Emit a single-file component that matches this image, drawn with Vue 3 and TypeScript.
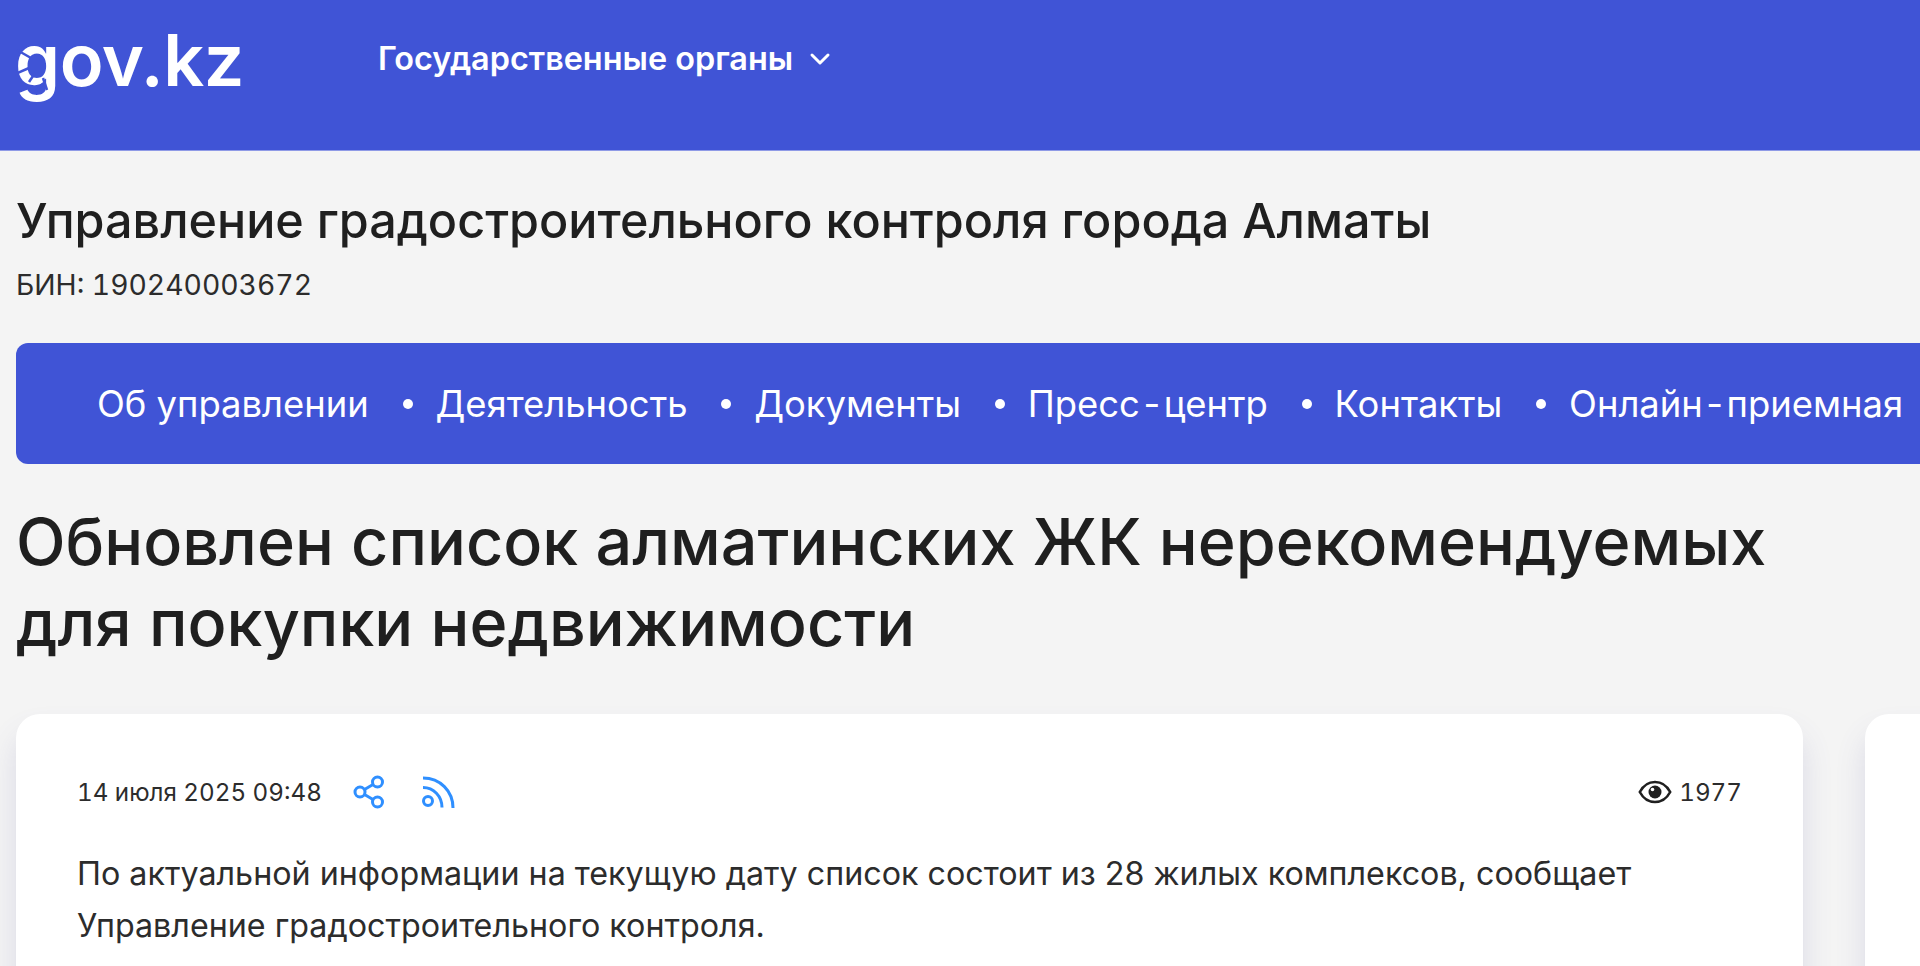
<script setup lang="ts">
interface NavItem { head: string; tail?: string }
const navItems: NavItem[] = [
  { head: 'Об управлении' },
  { head: 'Деятельность' },
  { head: 'Документы' },
  { head: 'Пресс', tail: 'центр' },
  { head: 'Контакты' },
  { head: 'Онлайн', tail: 'приемная' },
];
</script>

<template>
  <div class="page">
    <header class="top">
      <div class="logo">
        gov.kz
        <svg class="logo-cuts" width="60" height="70" viewBox="0 0 60 70" fill="none" stroke="#4054d6" stroke-width="2.500">
          <path d="M2 14l14 8" /><path d="M0 38l14-6" /><path d="M14 46l6-9" /><path d="M28 42l4 12" /><path d="M20 56l8-8" />
        </svg>
      </div>
      <div class="agencies">
        <span>Государственные органы</span>
        <svg width="22" height="14" viewBox="0 0 22 14" fill="none" stroke="#fff" stroke-width="3" stroke-linecap="round" stroke-linejoin="round"><path d="M3 3l8 8 8-8" /></svg>
      </div>
    </header>

    <main class="content">
      <h2 class="org">Управление градостроительного контроля города Алматы</h2>
      <div class="bin">БИН: 190240003672</div>

      <nav class="nav">
        <template v-for="(item, i) in navItems" :key="item.head">
          <span v-if="i > 0" class="dot"></span>
          <span class="nav-item">{{ item.head }}<span v-if="item.tail" class="hyphen">-</span>{{ item.tail }}</span>
        </template>
      </nav>

      <h1 class="title">Обновлен список алматинских ЖК нерекомендуемых для покупки недвижимости</h1>

      <div class="columns">
        <article class="card">
          <div class="meta">
            <span class="date">14 июля 2025 09:48</span>
            <svg class="ic share" width="32" height="34" viewBox="0 0 32 34" fill="none" stroke="#2f8fff" stroke-width="3">
              <circle cx="7" cy="17" r="5" /><circle cx="24.500" cy="7" r="5" /><circle cx="24.500" cy="27" r="5" />
              <path d="M11.500 14.500l8.500-5M11.500 19.500l8.500 5" />
            </svg>
            <svg class="ic rss" width="34" height="34" viewBox="0 0 34 34" fill="none" stroke="#2f8fff" stroke-width="3">
              <circle cx="7" cy="26" r="4.500" />
              <path d="M2 12.500c10.500 0 19 8.500 19 20" /><path d="M2 3c17 0 30 13 30 30" />
            </svg>
            <span class="views">
              <svg width="34" height="24" viewBox="0 0 34 24"><path fill="none" stroke="#1f1f1f" stroke-width="2.600" d="M1.800 12C5 6 10.500 2 17 2s12 4 15.200 10C29 18 23.500 22 17 22S5 18 1.800 12z" /><circle cx="17" cy="12" r="6.500" fill="#1f1f1f" /><circle cx="14.500" cy="9.500" r="1.800" fill="#fff" /></svg>
              1977
            </span>
          </div>
          <p class="text">По актуальной информации на текущую дату список состоит из 28 жилых комплексов, сообщает Управление градостроительного контроля.</p>
        </article>
        <aside class="side"></aside>
      </div>
    </main>
  </div>
</template>

<style>
html, body { margin: 0; padding: 0; background: #f4f4f4; overflow: hidden; }
</style>

<style scoped>
.page { width: 1920px; height: 966px; overflow: hidden; background: #f4f4f4; font-family: Inter, "Noto Sans", sans-serif; color: #1f1f1f; }
.top { height: 150px; background: #4054d6; display: flex; align-items: flex-start; color: #fff; border-bottom: 1px solid #8f9ae6; }
.logo { position: relative; margin-left: 15px; width: 363px; padding-top: 20px; font-size: 72px; line-height: 80px; font-weight: 600; letter-spacing: -0.4px; }
.logo-cuts { position: absolute; left: 0; top: 36px; }
.agencies { display: flex; align-items: center; gap: 16px; font-size: 32.4px; font-weight: 600; line-height: 40px; padding-top: 39px; }
.content { padding: 0 0 0 16px; }
.org { margin: 40px 0 0; font-size: 48.5px; line-height: 60px; font-weight: 500; }
.bin { margin-top: 16px; font-size: 28.3px; line-height: 36px; color: #2c2c2c; font-variant-numeric: tabular-nums; }
.nav { margin-top: 40px; height: 121px; width: 2000px; box-sizing: border-box; padding-left: 81px; background: #4054d6; border-radius: 12px; display: flex; align-items: center; color: #fff; font-size: 36.4px; white-space: nowrap; }
.hyphen { margin: 0 3.5px; }
.dot { width: 10px; height: 10px; border-radius: 50%; background: #fff; margin: 0 22.7px 0 34px; }
.title { margin: 37px 0 0; width: 1820px; font-size: 64.7px; line-height: 81px; font-weight: 500; }
.columns { display: flex; gap: 62px; margin-top: 51px; }
.card { width: 1787px; flex: none; height: 400px; box-sizing: border-box; padding: 58px 61px; background: #fff; border-radius: 24px; box-shadow: 0 20px 30px rgba(90, 90, 160, 0.16); }
.side { width: 400px; flex: none; height: 400px; background: #fff; border-radius: 24px; box-shadow: 0 20px 30px rgba(90, 90, 160, 0.16); }
.meta { display: flex; align-items: center; height: 40px; font-size: 24.2px; color: #2c2c2c; font-variant-numeric: tabular-nums; }
.ic { flex: none; }
.share { margin-left: 31px; }
.rss { margin-left: 36px; }
.views { margin-left: auto; display: flex; align-items: center; gap: 7px; }
.text { margin: 36px 0 0; font-size: 32.25px; line-height: 52px; color: #2c2c2c; }
</style>
